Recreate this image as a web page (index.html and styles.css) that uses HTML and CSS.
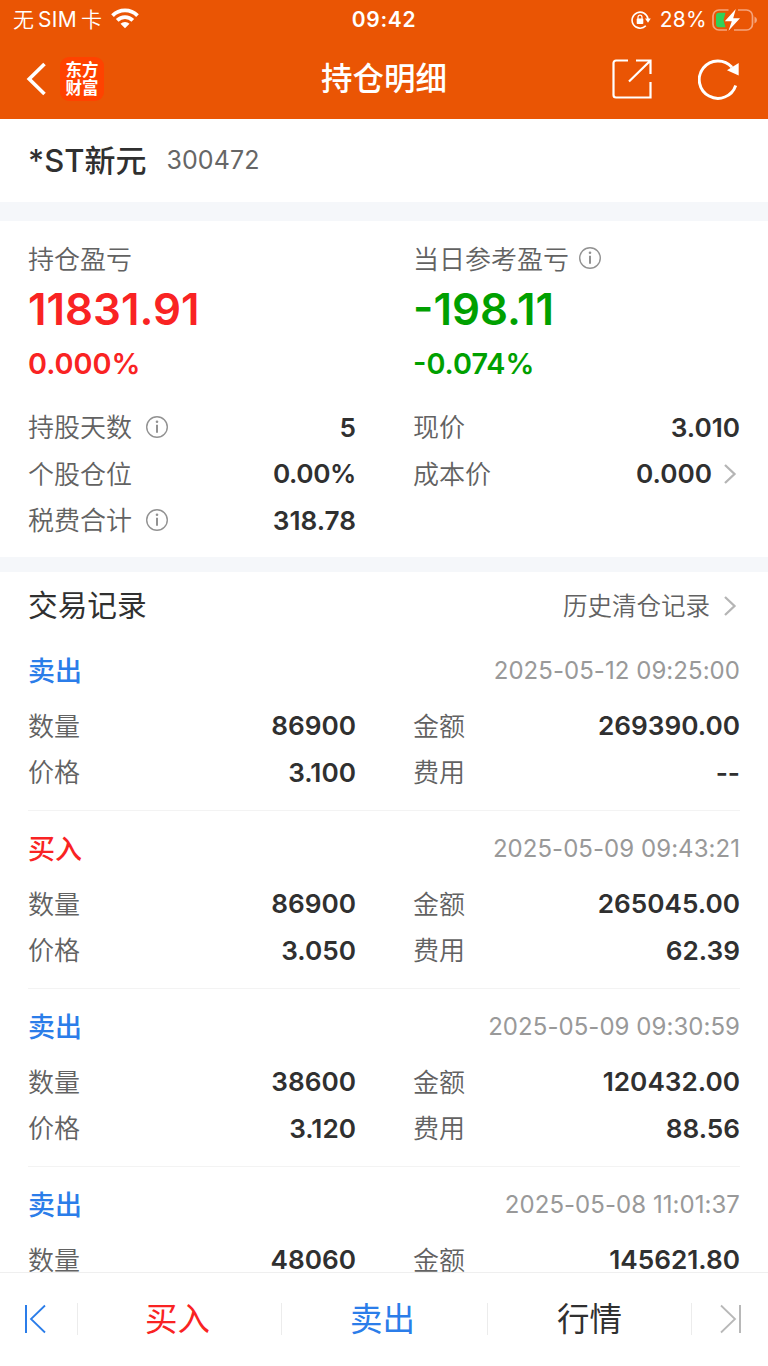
FILE: index.html
```html
<!DOCTYPE html>
<html lang="zh-CN">
<head>
<meta charset="utf-8">
<title>持仓明细</title>
<link rel="stylesheet" href="styles.css">
</head>
<body>
<svg width="0" height="0" class="defs">
  <symbol id="info" viewBox="0 0 24 24"><g fill="none" stroke="#929292" stroke-width="1.4"><circle cx="12" cy="12" r="10.3"/><path d="M12 9.8v8" stroke-width="2"/></g><circle cx="12" cy="6.7" r="1.3" fill="#929292"/></symbol>
  <symbol id="chev" viewBox="0 0 14 22"><path d="M2 2l9.5 9L2 20" fill="none" stroke="#b5b5b5" stroke-width="2.3"/></symbol>
</svg>
<div class="screen">
  <header class="top">
    <div class="status">
      <div class="carrier"><span>无</span><span class="sim">SIM</span><span>卡</span>
        <svg class="wifi" width="28" height="21" viewBox="0 0 28 21"><g fill="none" stroke="#fff" stroke-width="3.8"><path d="M1.5 7.6a17.7 17.7 0 0 1 25 0"/><path d="M6.2 12.3a11 11 0 0 1 15.6 0"/></g><path d="M9.5 15.8a6.4 6.4 0 0 1 9 0L14 20.3z" fill="#fff"/></svg>
      </div>
      <div class="time">09:42</div>
      <div class="power">
        <svg class="lock" width="20" height="18" viewBox="0 0 20 18"><path d="M14.8 14.8A8 8 0 1 1 17 8" fill="none" stroke="#fff" stroke-width="1.6"/><path d="M14 7.5h5.800L17 11.700z" fill="#fff"/><rect x="5.700" y="7.600" width="6.600" height="5.400" rx=".8" fill="#fff"/><path d="M7 8V6.200a2 2 0 0 1 4 0V8" fill="none" stroke="#fff" stroke-width="1.200"/></svg>
        <span class="pct">28%</span>
        <svg class="battery" width="46" height="24" viewBox="0 0 46 24"><path d="M16.500 2H7a6 6 0 0 0-6 6v8a6 6 0 0 0 6 6h8M26 2h8.500a6 6 0 0 1 6 6v8a6 6 0 0 1-6 6H22" fill="none" stroke="#f5a47c" stroke-width="1.700"/><path d="M42.500 8.500q2.500 1 2.500 3.500t-2.500 3.500z" fill="#f5a47c"/><path d="M7 4.800h6.500L11.500 12l2 7.200H7a3 3 0 0 1-3-3V7.800a3 3 0 0 1 3-3z" fill="#30d158"/><path d="M23.800 1L12.800 13.300h7L16.500 22.800 28 10.200h-6.800z" fill="#fff"/></svg>
      </div>
    </div>
    <nav class="nav">
      <div class="nav-left">
        <svg width="20" height="34" viewBox="0 0 20 34"><path d="M18.500 2L3.200 17l15.300 15" fill="none" stroke="#fff" stroke-width="3.600"/></svg>
        <div class="logo"><span>东方</span><span>财富</span></div>
      </div>
      <h1>持仓明细</h1>
      <div class="nav-right">
        <svg width="40" height="40" viewBox="0 0 40 40"><g fill="none" stroke="#fff" stroke-width="2.200"><path d="M16 1.500H4a2.500 2.500 0 0 0-2.500 2.500v32A2.500 2.500 0 0 0 4 38.500h34.500V23"/><path d="M24 1.500h14.500V15M37.500 2.500L17 22.500"/></g></svg>
        <svg width="42" height="42" viewBox="0 0 42 42"><path d="M34 9.300A18.700 18.700 0 1 0 37.700 27.500" fill="none" stroke="#fff" stroke-width="2.900"/><path d="M40.700 5v12.500L29 12.300z" fill="#fff"/></svg>
      </div>
    </nav>
  </header>

  <section class="stock"><h2>*ST新元</h2><span class="code">300472</span></section>

  <section class="summary">
    <div class="columns">
      <div class="gain">
        <div class="label">持仓盈亏</div>
        <div class="big red">11831.91</div>
        <div class="rate red">0.000%</div>
      </div>
      <div class="gain">
        <div class="label">当日参考盈亏<svg class="info near"><use href="#info"/></svg></div>
        <div class="big green">-198.11</div>
        <div class="rate green">-0.074%</div>
      </div>
    </div>
    <div class="columns facts">
      <div class="row"><span class="label">持股天数<svg class="info"><use href="#info"/></svg></span><b>5</b></div>
      <div class="row"><span class="label">现价</span><b>3.010</b></div>
      <div class="row"><span class="label">个股仓位</span><b class="percent">0.00%</b></div>
      <div class="row"><span class="label">成本价</span><b>0.000</b><svg class="chev"><use href="#chev"/></svg></div>
      <div class="row"><span class="label">税费合计<svg class="info"><use href="#info"/></svg></span><b>318.78</b></div>
    </div>
  </section>

  <section class="trades">
    <div class="trades-head"><h3>交易记录</h3><span class="history">历史清仓记录</span><svg class="chev"><use href="#chev"/></svg></div>
    <article class="trade">
      <div class="trade-head"><strong class="blue">卖出</strong><time>2025-05-12 09:25:00</time></div>
      <div class="columns">
        <div class="row"><span class="label">数量</span><b>86900</b></div><div class="row"><span class="label">金额</span><b>269390.00</b></div>
        <div class="row"><span class="label">价格</span><b>3.100</b></div><div class="row"><span class="label">费用</span><b>--</b></div>
      </div>
    </article>
    <article class="trade">
      <div class="trade-head"><strong class="red">买入</strong><time>2025-05-09 09:43:21</time></div>
      <div class="columns">
        <div class="row"><span class="label">数量</span><b>86900</b></div><div class="row"><span class="label">金额</span><b>265045.00</b></div>
        <div class="row"><span class="label">价格</span><b>3.050</b></div><div class="row"><span class="label">费用</span><b>62.39</b></div>
      </div>
    </article>
    <article class="trade">
      <div class="trade-head"><strong class="blue">卖出</strong><time>2025-05-09 09:30:59</time></div>
      <div class="columns">
        <div class="row"><span class="label">数量</span><b>38600</b></div><div class="row"><span class="label">金额</span><b>120432.00</b></div>
        <div class="row"><span class="label">价格</span><b>3.120</b></div><div class="row"><span class="label">费用</span><b>88.56</b></div>
      </div>
    </article>
    <article class="trade">
      <div class="trade-head"><strong class="blue">卖出</strong><time>2025-05-08 11:01:37</time></div>
      <div class="columns">
        <div class="row"><span class="label">数量</span><b>48060</b></div><div class="row"><span class="label">金额</span><b>145621.80</b></div>
      </div>
    </article>
  </section>

  <footer class="tabs">
    <div class="tab edge"><svg width="24" height="30" viewBox="0 0 24 30"><path d="M2 1v28" fill="none" stroke="#2b7de9" stroke-width="2"/><path d="M21 1.500L7 15l14 13.500" fill="none" stroke="#2b7de9" stroke-width="1.800"/></svg></div>
    <div class="tab red"><span>买入</span></div>
    <div class="tab blue"><span>卖出</span></div>
    <div class="tab"><span>行情</span></div>
    <div class="tab edge"><svg width="24" height="30" viewBox="0 0 24 30"><path d="M22 1v28" fill="none" stroke="#b8b8b8" stroke-width="2"/><path d="M3 1.500L17 15 3 28.500" fill="none" stroke="#b8b8b8" stroke-width="1.800"/></svg></div>
  </footer>
</div>
</body>
</html>
```
FILE: styles.css
```css
* { box-sizing: border-box; }
body { margin: 0; background: #fff; color: #303030; font-family: Inter, "Noto Sans CJK SC", sans-serif; }
h1, h2, h3 { margin: 0; font-weight: 500; }
svg { display: block; flex: none; }
.defs { position: absolute; }
.screen { height: 1366px; display: flex; flex-direction: column; overflow: hidden; }
.red { color: #f92323; }
.green { color: #00a000; }
.blue { color: #2b7de9; }

.top { height: 119px; flex: none; background: #ea5504; color: #fff; }
.status, .nav { display: grid; grid-template-columns: 1fr auto 1fr; align-items: center; }
.status { height: 39px; font-size: 21px; line-height: 39px; }
.carrier { display: flex; align-items: center; padding-left: 13px; font-weight: 350; }
.sim { margin: 0 4px; font-weight: 400; letter-spacing: 0.3px; }
.wifi { margin-left: 9px; margin-top: -2px; }
.time { font-weight: 600; letter-spacing: 0.7px; }
.power { display: flex; align-items: center; justify-content: flex-end; padding-right: 10px; }
.pct { margin: 0 5px 0 9px; letter-spacing: 0.3px; }
.nav { height: 80px; }
.nav-left { display: flex; align-items: center; padding-left: 26px; gap: 14px; }
.logo { width: 44px; height: 44px; border-radius: 9px; background: #ff4200; display: flex; flex-direction: column; align-items: center; justify-content: center; font-weight: 700; font-size: 16.5px; line-height: 18px; }
.nav h1 { font-size: 31.5px; line-height: 60px; }
.nav-right { display: flex; align-items: center; justify-content: flex-end; gap: 46px; padding-right: 28px; }

.stock { height: 83px; flex: none; display: flex; align-items: center; padding: 0 28px 2px; }
.stock h2 { font-size: 31px; padding-bottom: 2px; }
.code { margin-left: 20px; font-size: 25px; letter-spacing: 0.1px; color: #666; }
.summary { height: 370px; flex: none; border: solid #f5f7fa; border-width: 19px 0 15px; padding: 14px 28px 0; }
.columns { display: grid; grid-template-columns: 328px 327px; column-gap: 57px; }
.label { display: flex; align-items: center; height: 47px; padding-bottom: 3px; color: #626262; font-size: 26px; font-weight: 350; }
.info { width: 24px; height: 24px; margin: 2px 0 0 13px; }
.info.near { margin-left: 9px; }
.big { font-size: 43.8px; line-height: 55px; padding-bottom: 1px; font-weight: 600; }
.rate { font-size: 28.8px; line-height: 52px; font-weight: 600; }
.facts { margin-top: 14px; }
.row { height: 46.5px; display: flex; align-items: center; }
.row b { margin-left: auto; font-size: 26.2px; font-weight: 600; }
.row .percent { letter-spacing: -0.4px; }
.chev { width: 14px; height: 22px; margin: 0 3px 0 11px; }

.trades { flex: 1; min-height: 0; overflow: hidden; padding: 0 28px; }
.trades-head { height: 61px; padding-top: 6px; display: flex; align-items: center; }
.trades-head h3 { font-size: 29.7px; font-weight: 400; padding-bottom: 5px; }
.history { margin: 0 2px 0 auto; padding-bottom: 2px; font-size: 24.5px; font-weight: 350; color: #626262; }
.trade { height: 178px; padding-top: 6px; border-bottom: 1px solid #f3f3f3; }
.trade-head { height: 63.5px; padding-bottom: 1.5px; display: flex; align-items: center; justify-content: space-between; }
.trade-head strong { font-size: 27px; font-weight: 500; padding-bottom: 2px; }
.trade-head time { font-size: 24px; color: #999; letter-spacing: 0.05px; }

.tabs { height: 94px; flex: none; border-top: 1px solid #efefef; background: #fff; display: grid; grid-template-columns: 78px 204px 206px 204px 76px; align-items: center; padding-bottom: 2px; }
.tab { height: 32px; display: flex; align-items: center; justify-content: center; font-size: 32.5px; border-right: 1px solid #ececec; }
.tab span { padding-bottom: 4px; }
.tab:nth-child(2) span, .tab:nth-child(3) span { padding-right: 4px; }
.tab:last-child { border-right: 0; }
.tab.edge { padding-right: 6px; }
.tab.edge:last-child { padding: 0; }
```
